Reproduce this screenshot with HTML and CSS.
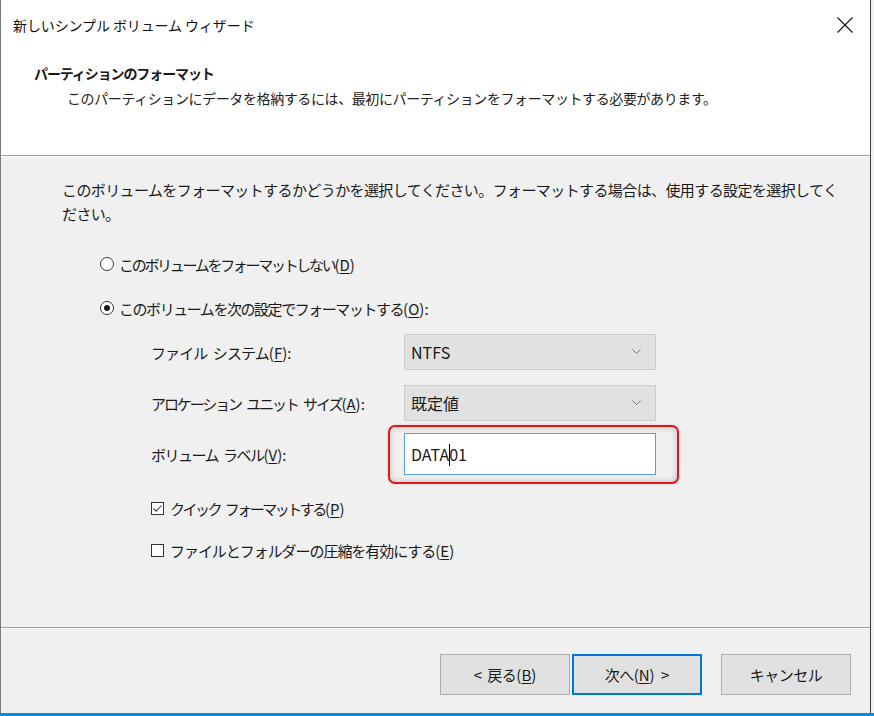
FILE: index.html
```html
<!DOCTYPE html>
<html lang="ja">
<head>
<meta charset="utf-8">
<title>新しいシンプル ボリューム ウィザード</title>
<link rel="stylesheet" href="styles.css">
</head>
<body>
<div class="screen">
  <div class="dialog">
    <div class="titlebar">
      <span class="title">新しいシンプル ボリューム ウィザード</span>
      <span class="close">
        <svg width="16" height="16" viewBox="0 0 16 16"><path d="M0.5 0.5 L15.5 15.5 M15.5 0.5 L0.5 15.5" stroke="#111" stroke-width="1.1" fill="none"/></svg>
      </span>
    </div>
    <div class="header">
      <div class="h-title">パーティションのフォーマット</div>
      <div class="h-sub">このパーティションにデータを格納するには、最初にパーティションをフォーマットする必要があります。</div>
    </div>
    <div class="sep"></div>
    <div class="body">
      <p class="intro">このボリュームをフォーマットするかどうかを選択してください。フォーマットする場合は、使用する設定を選択してください。</p>
      <div class="option first"><span class="radio"></span><span class="t-r1">このボリュームをフォーマットしない<span class="acc">(<u>D</u>)</span></span></div>
      <div class="option second"><span class="radio checked"></span><span class="t-r2">このボリュームを次の設定でフォーマットする<span class="acc">(<u>O</u>):</span></span></div>
      <div class="form">
        <div class="label l-fs">ファイル システム<span class="acc">(<u>F</u>):</span></div>
        <div class="combo c-fs">NTFS<span class="chev"><svg width="9" height="6" viewBox="0 0 9 6"><path d="M0.5 0.5 L4.5 4.5 L8.5 0.5" stroke="#777" fill="none"/></svg></span></div>
        <div class="label l-au">アロケーション ユニット サイズ<span class="acc">(<u>A</u>):</span></div>
        <div class="combo c-au">既定値<span class="chev"><svg width="9" height="6" viewBox="0 0 9 6"><path d="M0.5 0.5 L4.5 4.5 L8.5 0.5" stroke="#777" fill="none"/></svg></span></div>
        <div class="label l-vl">ボリューム ラベル<span class="acc">(<u>V</u>):</span></div>
        <div class="textbox-wrap">
          <div class="textbox">DATA<span class="caret"></span>01</div>
          <div class="highlight"></div>
        </div>
      </div>
      <div class="check first"><span class="box checked"><svg width="11" height="11" viewBox="0 0 11 11"><path d="M1.5 5.5 L4.2 8.2 L9.5 2.5" stroke="#444" stroke-width="1.1" fill="none"/></svg></span><span class="t-c1">クイック フォーマットする<span class="acc">(<u>P</u>)</span></span></div>
      <div class="check second"><span class="box"></span><span class="t-c2">ファイルとフォルダーの圧縮を有効にする<span class="acc">(<u>E</u>)</span></span></div>
    </div>
    <div class="sep"></div>
    <div class="footer">
      <button class="btn">&lt; 戻る<span class="acc">(<u>B</u>)</span></button>
      <button class="btn primary">次へ<span class="acc">(<u>N</u>) &gt;</span></button>
      <button class="btn cancel">キャンセル</button>
    </div>
  </div>
  <div class="side"></div>
</div>
<div class="taskbar"></div>
</body>
</html>
```

FILE: styles.css
```css
* { box-sizing: border-box; }
html, body { margin: 0; padding: 0; }
body {
  width: 874px;
  height: 716px;
  overflow: hidden;
  background: #e6e6e6;
  font-family: "Noto Sans CJK JP", "Noto Sans", sans-serif;
  color: #1a1a1a;
}
u { text-decoration: underline; text-underline-offset: 2px; text-decoration-thickness: 1px; }
.acc { letter-spacing: 0; }
.screen { display: flex; height: 713px; }
.dialog {
  width: 871px;
  height: 713px;
  display: flex;
  flex-direction: column;
  border-left: 1px solid #7a7a7a;
  border-right: 1px solid #3a3a3a;
  background: #fff;
}
.side { flex: 1; background: #f2f2f2; }
.titlebar {
  height: 46px;
  display: flex;
  align-items: center;
  justify-content: space-between;
  padding: 3px 17px 0 12px;
}
.title { font-size: 14px; letter-spacing: -0.1px; color: #111; }
.close { display: flex; margin-top: 0; }
.header { height: 109px; padding: 17px 0 0 33px; }
.h-title { font-size: 14px; font-weight: bold; letter-spacing: -1.1px; line-height: 20px; }
.h-sub { font-size: 14px; letter-spacing: -0.4px; line-height: 20px; margin: 5px 0 0 33px; color: #222; }
.sep { height: 2px; border-top: 1px solid #a0a0a0; background: #fff; flex: none; }
.body {
  flex: 1;
  background: #f0f0f0;
  padding: 21px 0 0 61px;
  font-size: 15px;
}
.intro { margin: 0; width: 784px; line-height: 24px; letter-spacing: -0.6px; }
.option { display: flex; align-items: center; height: 24px; margin-left: 38px; }
.option.first { margin-top: 26px; }
.option.second { margin-top: 20px; }
.t-r1 { letter-spacing: -2.3px; }
.t-r2 { letter-spacing: -1.45px; }
.radio {
  width: 14px; height: 14px; border: 1px solid #333; border-radius: 50%;
  background: #fff; margin-right: 5px; display: flex; align-items: center; justify-content: center;
}
.radio.checked::after { content: ""; width: 6px; height: 6px; border-radius: 50%; background: #1a1a1a; }
.form {
  display: grid;
  grid-template-columns: 253px 252px;
  margin: 14px 0 0 89px;
  align-items: center;
}
.label { letter-spacing: -0.9px; word-spacing: 3px; }
.l-au { letter-spacing: -2.1px; word-spacing: 4px; }
.l-vl { letter-spacing: -1.5px; word-spacing: 3px; }
.combo {
  height: 36px;
  background: #e1e1e1;
  border: 1px solid #cccccc;
  display: flex;
  align-items: center;
  justify-content: space-between;
  padding: 0 14px 0 6px;
  font-size: 16px;
}
.l-fs, .c-fs { margin-bottom: 15px; }
.l-au, .c-au { margin-bottom: 12px; }
.chev { display: flex; }
.textbox-wrap { position: relative; }
.textbox {
  height: 42px;
  background: #fff;
  border: 1px solid #5b9fe3;
  display: flex;
  align-items: center;
  padding: 0 6px;
  font-size: 16px;
}
.caret { display: inline-block; width: 1px; height: 22px; background: #000; margin: 0 -1px 0 0; position: relative; top: 1px; }
.highlight {
  position: absolute;
  left: -16px; top: -8px;
  width: 291px; height: 59px;
  border: 2px solid #e8131b;
  border-radius: 7px;
  box-shadow: inset 0 0 7px rgba(0,0,0,0.2), 0 0 3px rgba(0,0,0,0.15);
  pointer-events: none;
}
.check { display: flex; align-items: center; height: 24px; margin-left: 89px; }
.check.first { margin-top: 21px; }
.check.second { margin-top: 18px; }
.t-c1 { letter-spacing: -2.5px; word-spacing: 4px; }
.t-c2 { letter-spacing: -1.05px; }
.box {
  width: 13px; height: 13px; border: 1px solid #333; background: #fff; margin-right: 6px;
  display: flex; align-items: center; justify-content: center;
}
.footer {
  height: 84px;
  background: #f0f0f0;
  display: flex;
  align-items: flex-start;
  padding: 25px 0 0 439px;
}
.btn {
  width: 130px; height: 41px;
  background: #e1e1e1;
  border: 1px solid #adadad;
  font-family: inherit;
  font-size: 15px;
  letter-spacing: -0.5px;
  word-spacing: 3px;
  color: #1a1a1a;
  padding: 0;
}
.btn.primary { margin-left: 2px; border: 2px solid #0078d7; }
.btn.cancel { margin-left: 19px; }
.taskbar { height: 3px; background: #0a8fd6; }
```
